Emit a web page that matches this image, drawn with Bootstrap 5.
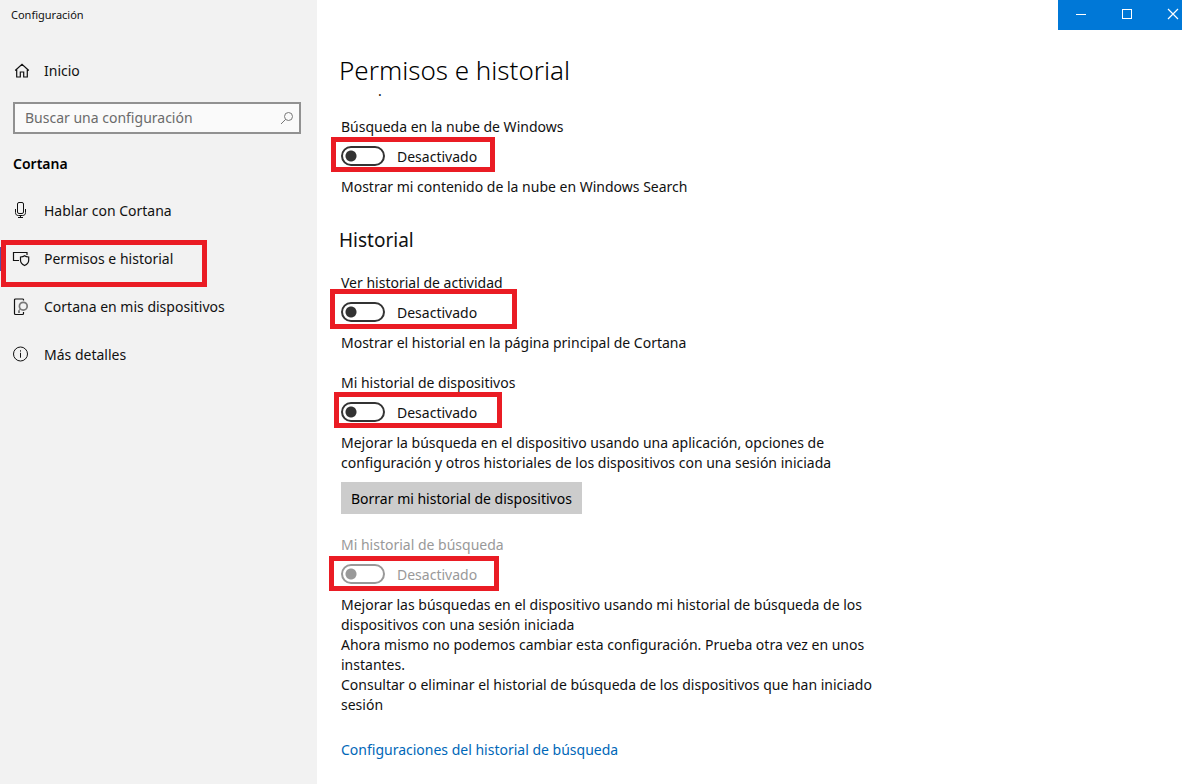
<!DOCTYPE html>
<html lang="es">
<head>
<meta charset="utf-8">
<meta name="viewport" content="width=device-width, initial-scale=1">
<title>Configuración</title>
<link href="https://cdn.jsdelivr.net/npm/bootstrap@5.3.0/dist/css/bootstrap.min.css" rel="stylesheet">
<style>
  body { font-family: "Noto Sans", "Open Sans", sans-serif; font-size: 14px; line-height: 20px; color: #111; background: #fff; }
  svg { display: block; fill: none; stroke: currentColor; }
  .side { flex: 0 0 317px; background: #f2f2f2; }
  .app-name { font-size: 11px; line-height: 30px; padding-left: 11px; }
  .side-link { display: flex; align-items: center; gap: 14px; height: 48px; padding-left: 12px; color: #111; text-decoration: none; position: relative; }
  .side-link svg { flex: none; }
  .home-link { height: 40px; margin-top: 21px; }
  .side-link.active::before { content: ""; position: absolute; left: 0; top: 12px; width: 3px; height: 24px; background: #5a4fa0; }
  .search-box { margin: 11px 16px 0 13px; height: 32px; border: 2px solid #919191; background: #fafafa; color: #777; }
  .search-box input { background: none; border: 0; border-radius: 0; padding: 0 0 0 10px; font-size: 14px; line-height: 20px; }
  .search-box input::placeholder { color: #6b6b6b; opacity: 1; }
  .side-heading { font-size: 14px; line-height: 20px; font-weight: 600; margin: 20px 0 13px 13px; color: #000; }
  .win-controls { width: 124px; height: 30px; background: #0078d7; overflow: hidden; }
  .win-controls button { flex: 0 0 46px; border: 0; background: none; color: #fff; padding: 0 0 2px; display: flex; align-items: center; justify-content: center; }
  .page { padding: 0 24px; }
  .page-title { font-size: 26px; line-height: 24px; font-weight: 300; color: #000; margin: 28px 0 -1px -2px; }
  .scrolled-text { padding-left: 37px; margin-bottom: 16px; }
  .section-title { font-size: 19px; line-height: 24px; font-weight: 400; margin: 31px 0 21px -2px; }
  .setting { max-width: 545px; margin-bottom: 20px; }
  .setting p { margin: 0; }
  .setting-name { display: block; }
  .toggle-row { position: relative; display: flex; align-items: center; gap: 12px; height: 20px; margin: 9px 0 11px; }
  .toggle-row .form-check-input { width: 44px; height: 20px; margin: 0; border: 2px solid #333; border-radius: 10px; background: radial-gradient(circle at 8px 8px, #333 5px, transparent 6px) #fff; flex: none; }
  .toggle-state { padding-top: 2px; }
  .setting.off .setting-name, .setting.off .toggle-row { color: #999; }
  .setting.off .form-check-input { opacity: 1; border-color: #999; background: radial-gradient(circle at 8px 8px, #999 5px, transparent 6px) #fff; }
  .callout-box { position: absolute; border: 5px solid #ea1c24; pointer-events: none; z-index: 1; }
  .callout-nav { left: 1px; top: 5px; width: 206px; height: 47px; }
  .callout-cloud { left: -10px; top: -9px; width: 164px; height: 35px; }
  .callout-activity { left: -11px; top: -13px; width: 187px; height: 40px; }
  .callout-device { left: -7px; top: -10px; width: 168px; height: 36px; }
  .callout-search { left: -12px; top: -8px; width: 170px; height: 35px; }
  .clear-btn { height: 32px; border-radius: 0; background: #ccc; color: #000; font-size: 14px; line-height: 20px; padding: 2px 10px 0; border: 0; margin: 9px 0 1px; }
  .more-link { display: inline-block; margin-top: 5px; color: #0067b8; text-decoration: none; }
</style>
</head>
<body>
<div class="d-flex min-vh-100">
  <aside class="side">
    <div class="app-name">Configuración</div>
    <a class="side-link home-link" href="#">
      <svg width="18" height="18" viewBox="0 0 18 18" stroke-width="1.2"><path d="M3.200 8.500 10 2.200l6.800 6.300M4.700 7.700v7.300h3.600v-5h3.400v5h3.600v-7.300"/></svg>
      <span>Inicio</span>
    </a>
    <div class="search-box d-flex align-items-center">
      <input class="form-control shadow-none" type="text" placeholder="Buscar una configuración" aria-label="Buscar una configuración">
      <svg class="flex-shrink-0 me-1" width="16" height="16" viewBox="0 0 16 16"><circle cx="9.500" cy="6.500" r="4"/><path d="M6.600 9.400 2 14"/></svg>
    </div>
    <h2 class="side-heading">Cortana</h2>
    <nav>
      <a class="side-link" href="#">
        <svg width="18" height="18" viewBox="0 0 18 18"><rect x="5.500" y=".5" width="6" height="11" rx="1.500"/><path d="M3.500 7v3.500c0 2 1 3 3 3h4c2 0 3-1 3-3V7M8.500 13.500v2M6 15.500h5"/></svg>
        <span>Hablar con Cortana</span>
      </a>
      <a class="side-link active" href="#" aria-current="page">
        <svg width="18" height="18" viewBox="0 0 18 18" stroke-width="1.2"><path d="M7 10.500H1.500v-8h13.500v2.500"/><path d="M12.600 5.800c1.200 1 2.500 1.200 4.100 1.200v3.200c0 2.400-1.500 4-4.100 5.300-2.600-1.300-4.100-2.900-4.100-5.300V7c1.600 0 2.900-.2 4.100-1.200z"/></svg>
        <span>Permisos e historial</span>
        <span class="callout-box callout-nav" aria-hidden="true"></span>
      </a>
      <a class="side-link" href="#">
        <svg width="18" height="18" viewBox="0 0 18 18" stroke-width="1.2"><path d="M11.500 2.500V1.500q0-.5-1-.5H3.500q-1 0-1 1v13.500q0 1 1 1h7q1 0 1-1v-1.500M6 14h2"/><circle cx="11.300" cy="8.200" r="3.900" stroke="#777" stroke-width="1.700"/><path d="M8.400 11.200 6.400 13.200" stroke="#777"/></svg>
        <span>Cortana en mis dispositivos</span>
      </a>
      <a class="side-link" href="#">
        <svg width="18" height="18" viewBox="0 0 18 18"><circle cx="8.500" cy="8" r="7"/><path d="M8.500 6.800v4.900M8.500 4.300v1.300"/></svg>
        <span>Más detalles</span>
      </a>
    </nav>
  </aside>

  <main class="flex-grow-1">
    <div class="d-flex justify-content-end">
      <div class="win-controls d-flex">
        <button type="button" aria-label="Minimizar"><svg width="12" height="12" viewBox="0 0 12 12"><path d="M1 6.500h10"/></svg></button>
        <button type="button" aria-label="Maximizar"><svg width="12" height="12" viewBox="0 0 12 12"><rect x="1.500" y="1.500" width="9" height="9"/></svg></button>
        <button type="button" aria-label="Cerrar"><svg width="12" height="12" viewBox="0 0 12 12" stroke-width="1.2"><path d="m1 1 10 10M11 1 1 11"/></svg></button>
      </div>
    </div>
    <div class="page">
      <h1 class="page-title">Permisos e historial</h1>
      <div class="scrolled-text">.</div>

      <section class="setting">
        <label class="setting-name" for="cloud">Búsqueda en la nube de Windows</label>
        <div class="toggle-row">
          <input class="form-check-input" type="checkbox" role="switch" id="cloud"><span class="toggle-state">Desactivado</span>
          <span class="callout-box callout-cloud" aria-hidden="true"></span>
        </div>
        <p>Mostrar mi contenido de la nube en Windows Search</p>
      </section>

      <h2 class="section-title">Historial</h2>

      <section class="setting">
        <label class="setting-name" for="activity">Ver historial de actividad</label>
        <div class="toggle-row">
          <input class="form-check-input" type="checkbox" role="switch" id="activity"><span class="toggle-state">Desactivado</span>
          <span class="callout-box callout-activity" aria-hidden="true"></span>
        </div>
        <p>Mostrar el historial en la página principal de Cortana</p>
      </section>

      <section class="setting">
        <label class="setting-name" for="device">Mi historial de dispositivos</label>
        <div class="toggle-row">
          <input class="form-check-input" type="checkbox" role="switch" id="device"><span class="toggle-state">Desactivado</span>
          <span class="callout-box callout-device" aria-hidden="true"></span>
        </div>
        <p>Mejorar la búsqueda en el dispositivo usando una aplicación, opciones de configuración y otros historiales de los dispositivos con una sesión iniciada</p>
        <button class="btn clear-btn" type="button">Borrar mi historial de dispositivos</button>
      </section>

      <section class="setting off">
        <label class="setting-name" for="history">Mi historial de búsqueda</label>
        <div class="toggle-row">
          <input class="form-check-input" type="checkbox" role="switch" id="history" disabled><span class="toggle-state">Desactivado</span>
          <span class="callout-box callout-search" aria-hidden="true"></span>
        </div>
        <p>Mejorar las búsquedas en el dispositivo usando mi historial de búsqueda de los dispositivos con una sesión iniciada</p>
        <p>Ahora mismo no podemos cambiar esta configuración. Prueba otra vez en unos instantes.</p>
        <p>Consultar o eliminar el historial de búsqueda de los dispositivos que han iniciado sesión</p>
      </section>

      <a class="more-link" href="#">Configuraciones del historial de búsqueda</a>
    </div>
  </main>
</div>
<script src="https://cdn.jsdelivr.net/npm/bootstrap@5.3.0/dist/js/bootstrap.bundle.min.js"></script>
</body>
</html>
